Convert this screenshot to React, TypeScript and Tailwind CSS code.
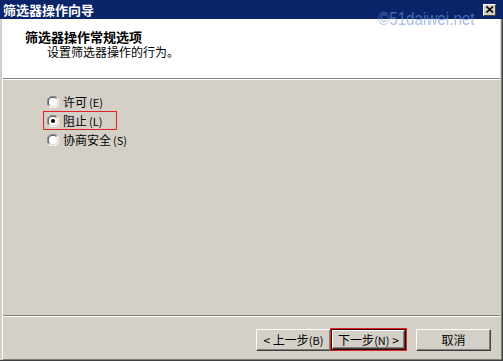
import React from "react";

const FONT = { fontFamily: '"Noto Sans CJK SC", "Liberation Sans", sans-serif' };

function Radio({ checked }: { checked?: boolean }) {
  return (
    <svg width="12" height="12" viewBox="0 0 12 12" className="shrink-0">
      <circle cx="6" cy="6" r="5.5" fill="#ffffff" />
      <path d="M10.2 1.8 A5.5 5.5 0 0 0 1.8 10.2" fill="none" stroke="#808080" strokeWidth="1" />
      <path d="M9.4 2.6 A4.5 4.5 0 0 0 2.6 9.4" fill="none" stroke="#404040" strokeWidth="1" />
      <path d="M1.8 10.2 A5.5 5.5 0 0 0 10.2 1.8" fill="none" stroke="#ffffff" strokeWidth="1" />
      <path d="M2.6 9.4 A4.5 4.5 0 0 0 9.4 2.6" fill="none" stroke="#d4d0c8" strokeWidth="1" />
      {checked && <circle cx="6" cy="6" r="2" fill="#000000" />}
    </svg>
  );
}

function Option({ label, hot, checked, marked }: { label: string; hot: string; checked?: boolean; marked?: boolean }) {
  return (
    <div
      className={`flex h-[19px] w-[74px] items-center gap-[4px] border pl-[3px] ${
        marked ? "border-[#e02424]" : "border-transparent"
      }`}
    >
      <Radio checked={checked} />
      <span className="whitespace-nowrap text-[12px] leading-[14px] text-black">
        {label}
        <span className="ml-[2px] text-[11px]">({hot})</span>
      </span>
    </div>
  );
}

function Btn({ children, def }: { children: React.ReactNode; def?: boolean }) {
  const inner = (
    <div className="flex h-full w-full items-center justify-center border-t border-l border-t-white border-l-white border-b border-r border-b-[#404040] border-r-[#404040] bg-[#d4d0c8] shadow-[inset_-1px_-1px_0_#808080] text-[12px] leading-[14px] text-black whitespace-nowrap">
      {children}
    </div>
  );
  if (def) {
    return (
      <div className="h-[23px] w-[77px] border border-[#e02424] -ml-[1px]">
        <div className="h-full w-full border border-[#3a0000]">{inner}</div>
      </div>
    );
  }
  return <div className="h-[22px] w-[75px]">{inner}</div>;
}

export default function App() {
  return (
    <div className="relative flex h-[361px] w-[503px] flex-col overflow-hidden bg-[#d4d0c8]" style={FONT}>
      {/* title bar */}
      <div className="flex h-[19px] shrink-0 items-center bg-[#0a246a] pl-[3px] pr-[7px]">
        <span className="text-[13px] font-bold leading-[15px] text-white">筛选器操作向导</span>
        <div className="ml-auto flex h-[12px] w-[13px] items-center justify-center border-t border-l border-t-white border-l-white border-b border-r border-b-[#404040] border-r-[#404040] bg-[#d4d0c8]">
          <svg width="8" height="7" viewBox="0 0 8 7">
            <path d="M0.5 0.5 L7 6.5 M7 0.5 L0.5 6.5" stroke="#000" strokeWidth="1.6" />
          </svg>
        </div>
      </div>

      {/* frame */}
      <div className="flex flex-1 flex-col pl-[2px] border-r border-r-[#404040] border-b border-b-[#404040]">
        <div className="flex flex-1 flex-col border-l border-l-white border-r border-r-[#808080] border-b border-b-[#808080]">
          <div className="flex flex-1 flex-col mr-[1px] mb-[1px]">
            {/* header */}
            <div className="h-[59px] shrink-0 bg-white pl-[22px] pt-[10px]">
              <div className="text-[13px] font-bold leading-[15px] text-black">筛选器操作常规选项</div>
              <div className="mt-[1px] pl-[22px] text-[12px] leading-[14px] text-black">设置筛选器操作的行为。</div>
            </div>
            <div className="h-px shrink-0 bg-[#808080]" />
            <div className="h-px shrink-0 bg-white" />

            {/* body */}
            <div className="flex flex-1 flex-col pl-[40px] pt-[12px]">
              <Option label="许可" hot="E" />
              <Option label="阻止" hot="L" checked marked />
              <Option label="协商安全" hot="S" />
            </div>

            <div className="h-px shrink-0 bg-[#808080]" />
            <div className="h-px shrink-0 bg-white" />

            {/* buttons */}
            <div className="flex h-[41px] shrink-0 items-start justify-end pr-[9px] pt-[11px]">
              <div className="mt-[1px]">
                <Btn>&lt; 上一步<span className="text-[11px]">(B)</span></Btn>
              </div>
              <div>
                <Btn def>
                  下一步<span className="text-[11px]">(N)</span>&nbsp;&gt;
                </Btn>
              </div>
              <div className="ml-[9px] mt-[1px]">
                <Btn>取消</Btn>
              </div>
            </div>
          </div>
        </div>
      </div>

      {/* watermark */}
      <div
        className="pointer-events-none absolute left-[378px] top-[9px] origin-left scale-x-[0.8] whitespace-nowrap text-[19px] leading-[20px] text-[rgba(110,150,220,0.6)]"
        style={{ fontFamily: '"Liberation Sans", sans-serif' }}
      >
        ©51daiwei.net
      </div>
    </div>
  );
}
